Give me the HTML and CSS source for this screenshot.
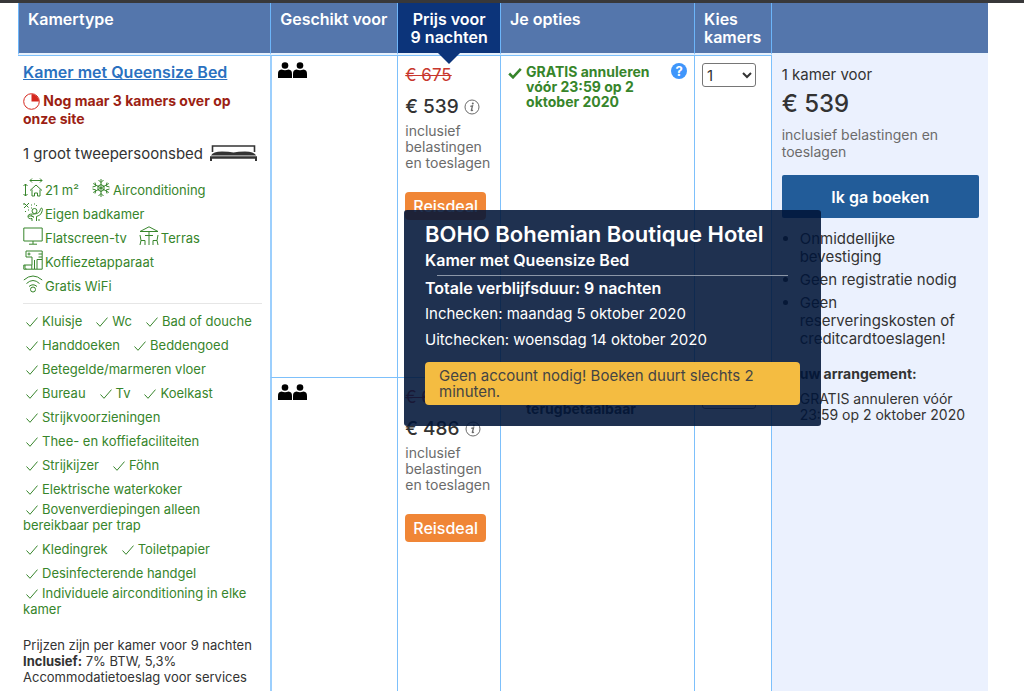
FILE: index.html
```html
<!DOCTYPE html>
<html lang="nl">
<head>
    <meta charset="utf-8">
    <title>BOHO Bohemian Boutique Hotel</title>
    <meta name="viewport" content="width=device-width">
    <link rel="stylesheet" href="styles.css">
</head>
<body>

    <!-- Shared icons -->
    <svg class="sprite" aria-hidden="true">
        <symbol id="tick" viewBox="0 0 12 10"><path d="M.5 5.500 4 9.300 11.500.6" fill="none" stroke="currentColor"/></symbol>
        <symbol id="person" viewBox="0 0 14 16"><circle cx="7" cy="3.500" r="3.300"/><path d="M0 16v-4C0 9 1 7.900 3.500 7.600q3.500 1.300 7 0C13 7.900 14 9 14 12v4z"/></symbol>
        <symbol id="info" viewBox="0 0 16 16"><circle cx="8" cy="8" r="7" fill="none" stroke="currentColor"/><circle cx="8.800" cy="4.600" r="1" fill="currentColor"/><path d="M6.300 7.300 8.500 6.800 7.300 11.500q.3.500 1.600-.5" fill="none" stroke="currentColor" stroke-width="1.300"/></symbol>
    </svg>

    <div class="topbar"></div>

    <table class="rooms">
        <colgroup>
            <col class="col-type">
            <col class="col-guests">
            <col class="col-price">
            <col class="col-options">
            <col class="col-select">
            <col class="col-book">
        </colgroup>
        <thead>
            <tr>
                <th>Kamertype</th>
                <th>Geschikt voor</th>
                <th class="current">Prijs voor<br>9 nachten</th>
                <th>Je opties</th>
                <th>Kies kamers</th>
                <th></th>
            </tr>
        </thead>
        <tbody>
            <tr class="first">
                <td class="type" rowspan="2">
                    <a class="room-name" href="#">Kamer met Queensize Bed</a>
                    <p class="scarce">
                        <svg class="pie" viewBox="0 0 17 17"><circle cx="8.500" cy="8.500" r="7.800" fill="none" stroke="#d5281e"/><path d="M8.500 8.500V1a7.500 7.500 0 0 1 7.500 7.500z" fill="#d5281e"/></svg>
                        Nog maar 3 kamers over op onze site
                    </p>
                    <p class="bed">1 groot tweepersoonsbed
                        <svg class="bed-icon" viewBox="0 0 47 16"><path d="M2.500 7V1h42v6" fill="none" stroke="#333" stroke-width="1.600"/><path d="M1 10.500Q3 6.500 12 6.500q7 0 11.500 1Q28 6.500 35 6.500q9 0 11 4z" fill="#333"/><path d="M0 11.200h47V16h-2v-2.200H2V16H0z" fill="#333"/></svg>
                    </p>
                    <ul class="facilities">
                        <li><svg viewBox="0 0 20 20"><path d="M2.500 6v12M.5 8l2-2 2 2M.5 16l2 2 2-2M7 2.500h12M9 .5l-2 2 2 2M17 .5l2 2-2 2M7 12.500l6-5.500 6 5.500M9 11.500V18h2.500v-3h3v3H17v-6.500"/></svg>21 m²</li>
                        <li><svg viewBox="0 0 20 20"><path d="M10 1v18M2.200 5.500l15.600 9M17.800 5.500l-15.600 9M7.500 2 10 4.500 12.500 2M7.500 18l2.500-2.500 2.500 2.500M1.500 9l3.400-1L4 4.500M18.500 9l-3.400-1 .9-3.500M1.500 11l3.400 1-.9 3.500M18.500 11l-3.400 1 .9 3.500M10 6.500l3 1.700v3.600l-3 1.700-3-1.700V8.200z"/></svg>Airconditioning</li>
                        <li><svg viewBox="0 0 20 20"><path d="M1 6 6 1M1.500 1.500l4 4M1 1v2M2 9.500h1M5 8h1M8 3h1M11 2h1M8 6h1M13 3.500h1"/><circle cx="11.500" cy="9" r="2.500"/><path d="M18 6c2 0 1.500 2 .8 4-.8 3-3 3.500-5.300 4.500V19M17.500 6.500c-.5 4-2.500 5-6 5.500-3 .3-6-.5-6.500 2s2 3 4 2.500v2.500M8 13.500l3 2M16 17v2M5.500 14.500c2-1.500 4 0 5 0"/></svg>Eigen badkamer</li>
                        <li><svg viewBox="0 0 20 20"><path d="M.8 2h18.400v13H.8zM10 15v3M6 18.200h8"/></svg>Flatscreen-tv</li>
                        <li><svg viewBox="0 0 20 20"><path d="M1 5.500 10 .8l9 4.700zM10 5.500V19M6 9.500h8M1 9l1 5.500h4V19M2 14.500 1 19M19 9l-1 5.500h-4V19M18 14.500l1 4.500"/></svg>Terras</li>
                        <li><svg viewBox="0 0 20 20"><path d="M3 1h16.200v18.200H.8V15h8v4M3 1v6h6v8M14 19V9.500h5M15.500 4h3.500M15.500 7h3.500M2 15v2.500c0 1 .5 1.500 1.500 1.500M11.500 10v9"/><circle cx="6" cy="4" r="1"/></svg>Koffiezetapparaat</li>
                        <li><svg viewBox="0 0 20 20"><path d="M.8 6q9.200-8 18.400 0M3.500 9.500q6.500-6 13 0M6 12.500q4-3.500 8 0"/><circle cx="10" cy="15.500" r="2.500"/></svg>Gratis WiFi</li>
                    </ul>
                    <ul class="extras">
                        <li><svg><use href="#tick"/></svg>Kluisje</li>
                        <li><svg><use href="#tick"/></svg>Wc</li>
                        <li><svg><use href="#tick"/></svg>Bad of douche</li>
                        <li><svg><use href="#tick"/></svg>Handdoeken</li>
                        <li><svg><use href="#tick"/></svg>Beddengoed</li>
                        <li><svg><use href="#tick"/></svg>Betegelde/marmeren vloer</li>
                        <li><svg><use href="#tick"/></svg>Bureau</li>
                        <li><svg><use href="#tick"/></svg>Tv</li>
                        <li><svg><use href="#tick"/></svg>Koelkast</li>
                        <li><svg><use href="#tick"/></svg>Strijkvoorzieningen</li>
                        <li><svg><use href="#tick"/></svg>Thee- en koffiefaciliteiten</li>
                        <li><svg><use href="#tick"/></svg>Strijkijzer</li>
                        <li><svg><use href="#tick"/></svg>Föhn</li>
                        <li><svg><use href="#tick"/></svg>Elektrische waterkoker</li>
                        <li class="long"><svg><use href="#tick"/></svg>Bovenverdiepingen alleen bereikbaar per trap</li>
                        <li><svg><use href="#tick"/></svg>Kledingrek</li>
                        <li><svg><use href="#tick"/></svg>Toiletpapier</li>
                        <li><svg><use href="#tick"/></svg>Desinfecterende handgel</li>
                        <li class="long"><svg><use href="#tick"/></svg>Individuele airconditioning in elke kamer</li>
                    </ul>
                    <p class="taxes">Prijzen zijn per kamer voor 9 nachten<br><b>Inclusief:</b> 7% BTW, 5,3% Accommodatietoeslag voor services</p>
                </td>
                <td class="guests">
                    <svg><use href="#person"/></svg><svg><use href="#person"/></svg>
                </td>
                <td class="price">
                    <del>€ 675</del>
                    <div class="amount">€ 539 <svg><use href="#info"/></svg></div>
                    <p class="note">inclusief belastingen en toeslagen</p>
                    <span class="deal">Reisdeal</span>
                </td>
                <td class="options">
                    <div class="policy free">
                        <svg class="check" viewBox="0 0 14 12"><path d="M1.200 6.500 5 10.300 12.800 1.800" fill="none" stroke="currentColor" stroke-width="2.600"/></svg>
                        <span>GRATIS annuleren vóór 23:59 op 2 oktober 2020</span>
                        <button class="help" type="button" aria-label="Meer informatie">?</button>
                    </div>
                </td>
                <td class="choose">
                    <select aria-label="Kies kamers"><option>0</option><option selected>1</option><option>2</option><option>3</option></select>
                </td>
                <td class="book" rowspan="2">
                    <div class="count">1 kamer voor</div>
                    <div class="total">€ 539</div>
                    <p class="note">inclusief belastingen en toeslagen</p>
                    <div class="book-action">
                        <button class="book-button" type="button">Ik ga boeken</button>
                        <div class="tooltip">
                            <h2>BOHO Bohemian Boutique Hotel</h2>
                            <h3>Kamer met Queensize Bed</h3>
                            <hr>
                            <p class="stay">Totale verblijfsduur: 9 nachten</p>
                            <p>Inchecken: maandag 5 oktober 2020</p>
                            <p>Uitchecken: woensdag 14 oktober 2020</p>
                            <div class="account">Geen account nodig! Boeken duurt slechts 2 minuten.</div>
                        </div>
                    </div>
                    <ul class="perks">
                        <li>Onmiddellijke bevestiging</li>
                        <li>Geen registratie nodig</li>
                        <li>Geen reserveringskosten of creditcardtoeslagen!</li>
                    </ul>
                    <div class="package">
                        <h4>uw arrangement:</h4>
                        <p>GRATIS annuleren vóór 23:59 op 2 oktober 2020</p>
                    </div>
                </td>
            </tr>
            <tr>
                <td class="guests">
                    <svg><use href="#person"/></svg><svg><use href="#person"/></svg>
                </td>
                <td class="price">
                    <del>€ 608</del>
                    <div class="amount">€ 486 <svg><use href="#info"/></svg></div>
                    <p class="note">inclusief belastingen en toeslagen</p>
                    <span class="deal">Reisdeal</span>
                </td>
                <td class="options">
                    <div class="policy strict"><span>Niet terugbetaalbaar</span></div>
                </td>
                <td class="choose">
                    <select aria-label="Kies kamers"><option>0</option><option>1</option><option>2</option></select>
                </td>
            </tr>
        </tbody>
    </table>

</body>
</html>
```
FILE: styles.css
```css
/* Page */
body {
    margin: 0;
    background: #fff;
    color: #333;
    font: 14px/16px Inter, "Liberation Sans", sans-serif;
}

p, ul, h2, h3, h4 {
    margin: 0;
    padding: 0;
    font: inherit;
}

.sprite {
    display: none;
}

.topbar {
    height: 3px;
    background: #38383a;
}

/* Rooms table */
.rooms {
    width: calc(100% - 54px);
    height: calc(100vh - 3px);
    margin-left: 18px;
    table-layout: fixed;
    border-collapse: separate;
    border-spacing: 0;
}

.col-type { width: 26%; }
.col-guests { width: 13.1%; }
.col-price { width: 10.6%; }
.col-options { width: 20%; }
.col-select { width: 7.9%; }

.rooms th {
    position: relative;
    height: 38px;
    padding: 7px 4px 5px 9px;
    background: #5476ac;
    background-clip: padding-box;
    border-left: 1px solid #6cb5fa;
    border-bottom: 2px solid #e8f2fd;
    color: #fff;
    font-size: 16px;
    font-weight: 600;
    line-height: 18px;
    text-align: left;
    vertical-align: top;
}

.rooms th.current {
    padding-left: 4px;
    background-color: #0c347a;
    text-align: center;
}

.rooms th.current::after {
    content: "";
    position: absolute;
    top: 50px;
    left: 50%;
    margin-left: -11px;
    border: 11px solid transparent;
    border-top-color: #0c347a;
    border-bottom: 0;
}

.rooms td {
    padding: 7px;
    border-top: 1px solid #7dc0fb;
    border-left: 1px solid #7dc0fb;
    vertical-align: top;
}

.rooms tr.first td {
    height: 307px;
}

/* Room type */
.rooms .type {
    padding: 6px 8px 7px 5px;
    border-left: 0;
}

.room-name {
    display: block;
    color: #2a71c0;
    font-size: 16px;
    font-weight: 600;
    line-height: 20px;
}

.scarce {
    margin-top: 10px;
    color: #9c1f14;
    font-weight: 700;
    line-height: 18px;
}

.pie {
    width: 17px;
    height: 17px;
    vertical-align: -4px;
}

.bed {
    margin-top: 16px;
    font-size: 15px;
    line-height: 20px;
}

.bed-icon {
    width: 47px;
    height: 16px;
    margin-left: 3px;
    vertical-align: -2px;
}

.facilities, .extras {
    display: flex;
    flex-wrap: wrap;
    color: #37852b;
    font-size: 13px;
    list-style: none;
}

.facilities {
    margin: 14px 0 5px;
    padding-bottom: 5px;
    border-bottom: 1px solid #e6e6e6;
}

.facilities li {
    display: flex;
    align-items: center;
    height: 24px;
    margin-right: 12px;
}

.facilities svg {
    width: 20px;
    height: 20px;
    margin-right: 2px;
    margin-top: -5px;
    fill: none;
    stroke: currentColor;
}

.extras {
    column-gap: 11px;
}

.extras li {
    margin: 4px 0;
}

.extras li.long {
    margin-top: 0;
}

.extras svg {
    width: 12px;
    height: 10px;
    margin: 0 4px 0 3px;
    vertical-align: -1px;
}

.taxes {
    margin-top: 16px;
    font-size: 13px;
}

/* Guests */
.rooms .guests {
    padding: 6px;
    border-left: 2px solid #9ccffd;
}

.guests svg {
    width: 14px;
    height: 16px;
    margin-right: 1px;
}

/* Price */
.price del {
    display: block;
    margin-top: 2px;
    color: #c8372d;
    font-size: 17px;
    line-height: 20px;
}

.amount {
    margin-top: 11px;
    font-size: 19px;
    font-weight: 500;
    line-height: 22px;
}

.amount svg {
    width: 16px;
    height: 16px;
    color: #6b6b6b;
    vertical-align: -2px;
}

.note {
    color: #6b6b6b;
    line-height: 17px;
}

.price .note {
    margin: 5px 0 21px;
    line-height: 16px;
}

.deal {
    display: inline-block;
    padding: 4px 8px;
    border-radius: 4px;
    background: #f08636;
    color: #fff;
    font-size: 16px;
    font-weight: 500;
    line-height: 20px;
}

/* Options */
.policy {
    display: flex;
    gap: 4px;
    font-weight: 700;
    line-height: 15px;
}

.policy span {
    flex: 1;
    margin-top: 1px;
}

.free {
    color: #37852b;
}

.strict {
    padding: 0 40px 0 18px;
}

.check {
    width: 14px;
    height: 12px;
    margin-top: 4px;
}

.help {
    width: 16px;
    height: 16px;
    padding: 0;
    border: 0;
    border-radius: 50%;
    background: #3f96fb;
    color: #fff;
    font: bold 13px/16px Inter, sans-serif;
}

.choose select {
    width: 54px;
    height: 24px;
    border: 1px solid #767676;
    border-radius: 3px;
    background: #fff;
    color: #333;
    font: 15px Inter, sans-serif;
}

/* Booking column */
.rooms .book {
    padding: 10px 9px 10px 10px;
    border-top: 0;
    background: #ebf1fe;
}

.count {
    font-size: 15px;
    line-height: 20px;
}

.total {
    margin: 5px 0 8px;
    font-size: 24px;
    font-weight: 500;
    line-height: 28px;
}

.book-action {
    position: relative;
    margin: 15px 0 12px;
}

.book-button {
    display: block;
    width: 100%;
    height: 43px;
    border: 0;
    border-radius: 2px;
    background: #225c99;
    color: #fff;
    font: 600 16px Inter, sans-serif;
}

.perks {
    padding: 0 18px;
    font-size: 15px;
    line-height: 18px;
}

.perks li {
    margin-bottom: 5px;
}

.package {
    padding: 13px 0 0 18px;
}

.package h4 {
    margin-bottom: 9px;
    font-weight: 700;
}

/* Booking summary, shown over the table */
.tooltip {
    position: absolute;
    z-index: 1;
    top: 35px;
    right: 158px;
    box-sizing: border-box;
    width: 417px;
    padding: 10px 21px 21px;
    border-radius: 3px;
    background: rgba(0, 21, 56, .88);
    color: #fff;
    font-size: 15px;
    line-height: 20px;
}

.tooltip h2 {
    font-size: 22px;
    font-weight: 600;
    line-height: 28px;
}

.tooltip h3, .tooltip .stay {
    font-size: 16px;
    font-weight: 600;
}

.tooltip h3 {
    margin-top: 2px;
}

.tooltip hr {
    margin: 5px 12px 2px;
    border: 0;
    border-top: 1px solid #8b96a7;
}

.tooltip p {
    margin-bottom: 6px;
}

.account {
    margin-top: 12px;
    padding: 6px 14px 5px;
    border-radius: 4px;
    background: #f4bc41;
    color: #444;
    line-height: 16px;
}
```
